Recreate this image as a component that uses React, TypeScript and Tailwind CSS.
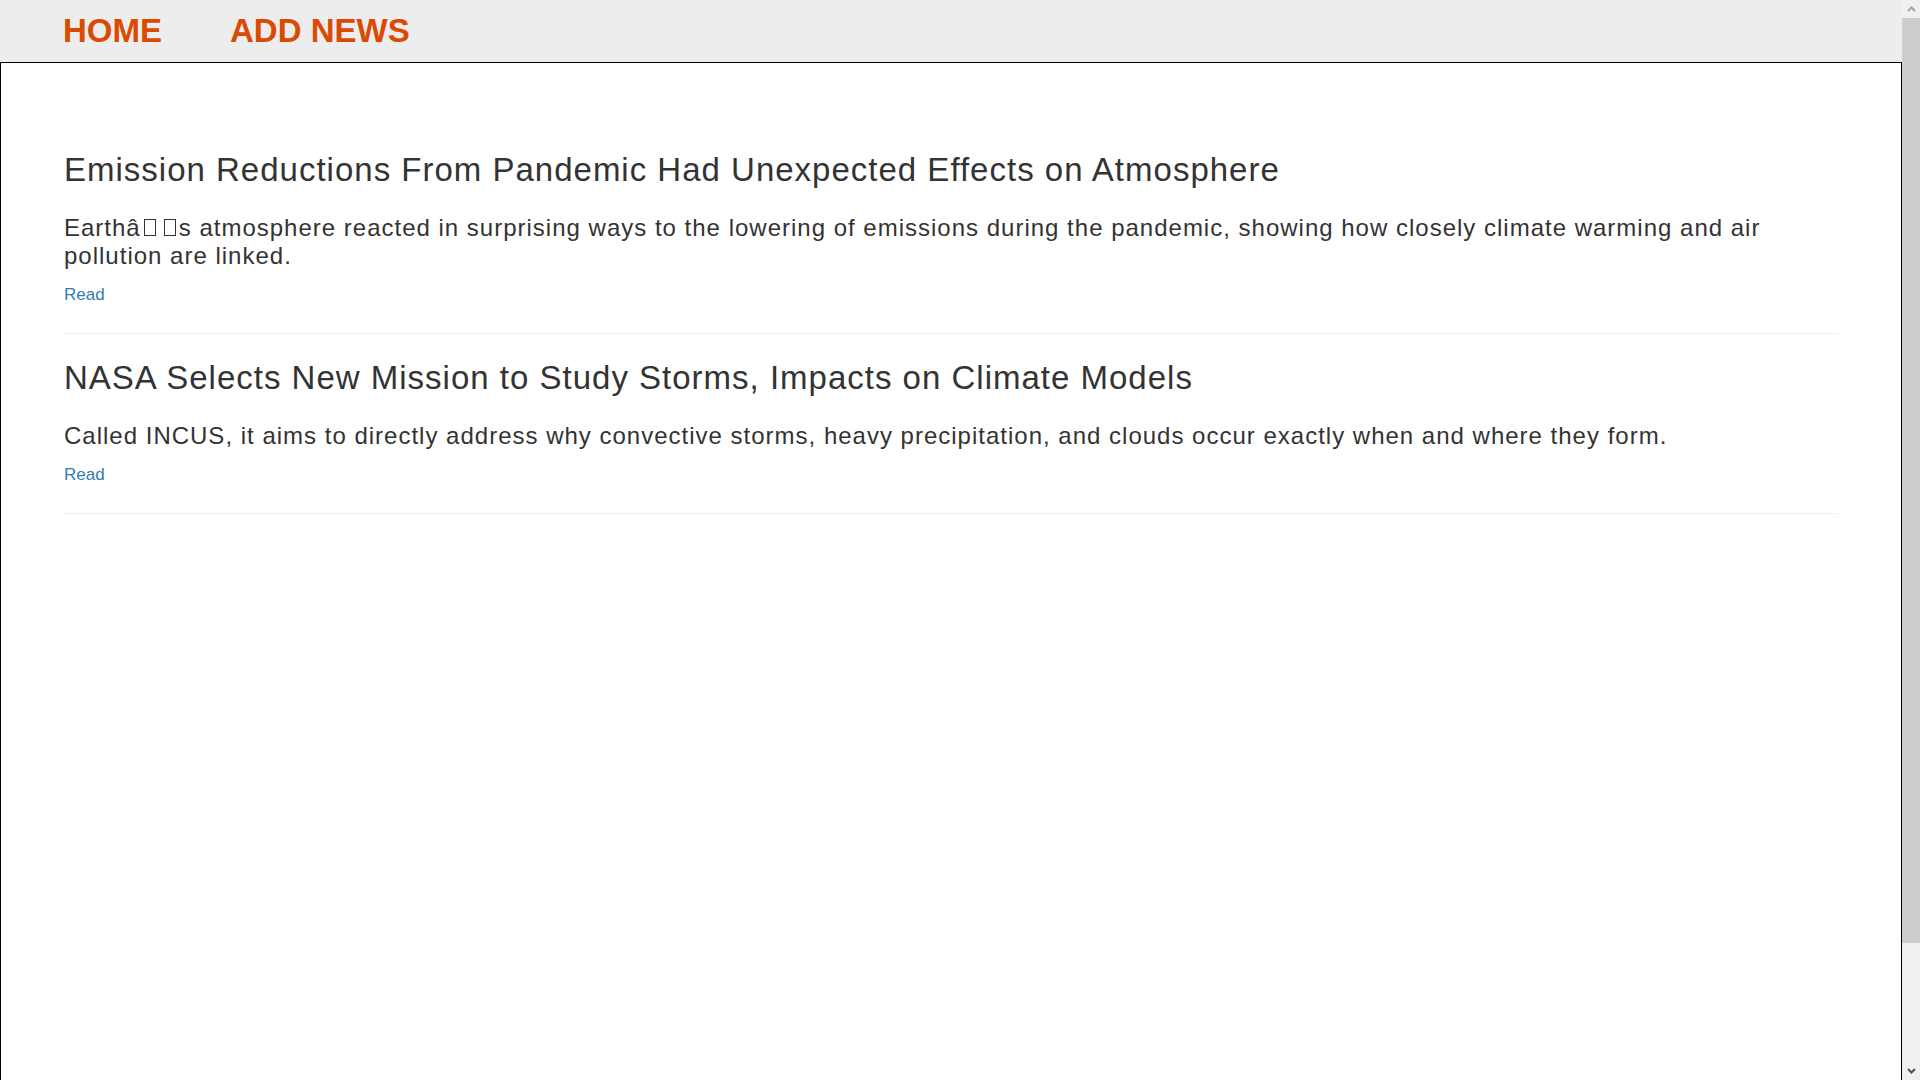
import React from "react";

const font = { fontFamily: '"Liberation Sans", Arial, Helvetica, sans-serif' };

function Tofu({ className }: { className?: string }) {
  return (
    <span
      aria-hidden="true"
      className={"inline-block w-[12px] h-[17px] border border-[#333] align-baseline " + (className ?? "")}
    />
  );
}

type Article = { title: string; body: React.ReactNode };

const articles: Article[] = [
  {
    title: "Emission Reductions From Pandemic Had Unexpected Effects on Atmosphere",
    body: (
      <>
        Earthâ<Tofu className="ml-[3px]" />
        <Tofu className="ml-[8px] mr-[3px]" />s atmosphere reacted in surprising ways to the lowering of emissions during the
        pandemic, showing how closely climate warming and air pollution are linked.
      </>
    ),
  },
  {
    title: "NASA Selects New Mission to Study Storms, Impacts on Climate Models",
    body: "Called INCUS, it aims to directly address why convective storms, heavy precipitation, and clouds occur exactly when and where they form.",
  },
];

export default function App() {
  return (
    <div className="flex h-screen w-full overflow-hidden bg-white" style={font}>
      <div className="flex flex-1 flex-col min-w-0">
        <header className="flex h-[62px] items-center bg-[#ededed] pl-[63px] gap-[68px]">
          <a href="#" className="text-[33px] font-bold leading-[62px] text-[#db4a02] no-underline">
            HOME
          </a>
          <a href="#" className="text-[33px] font-bold leading-[62px] text-[#db4a02] no-underline">
            ADD NEWS
          </a>
        </header>
        <main className="flex-1 border-l border-t border-r border-black px-[63px] pt-[89px]">
          {articles.map((a, i) => (
            <article key={i} className={i > 0 ? "pt-[26px]" : ""}>
              <h2 className="text-[33px] leading-[36px] font-normal tracking-[1px] text-[#333]">{a.title}</h2>
              <p className="mt-[26px] text-[24px] leading-[28px] tracking-[1px] text-[#333]">{a.body}</p>
              <a href="#" className="mt-[15px] block w-fit text-[17px] leading-[20px] text-[#337ab7]">
                Read
              </a>
              <hr className="mt-[28px] border-0 border-t border-[#eeeeee]" />
            </article>
          ))}
        </main>
      </div>
      <div className="flex w-[18px] flex-col bg-[#f0f0f0]">
        <div className="flex h-[18px] items-center justify-center">
          <svg width="9" height="6" viewBox="0 0 9 6">
            <polyline points="1,5 4.5,1.5 8,5" fill="none" stroke="#a3a3a3" strokeWidth="2" />
          </svg>
        </div>
        <div className="h-[925px] bg-[#cdcdcd]" />
        <div className="flex-1" />
        <div className="flex h-[18px] items-center justify-center">
          <svg width="9" height="6" viewBox="0 0 9 6">
            <polyline points="1,1 4.5,4.5 8,1" fill="none" stroke="#505050" strokeWidth="2" />
          </svg>
        </div>
      </div>
    </div>
  );
}
